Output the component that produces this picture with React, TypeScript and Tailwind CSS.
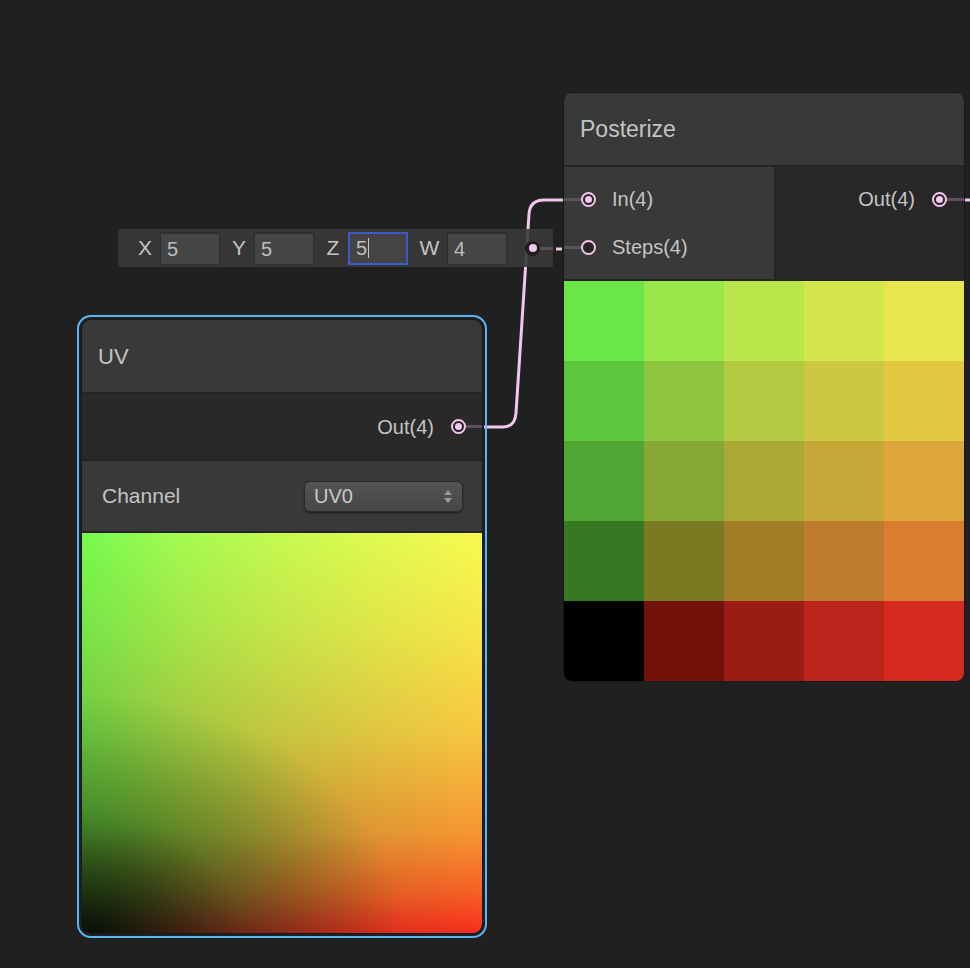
import React from 'react';

const PINK = '#f3c6ee';

const posterizeCells: string[] = [
  'bg-[#6be649]', 'bg-[#99e649]', 'bg-[#b9e74b]', 'bg-[#d4e64b]', 'bg-[#e8e64e]',
  'bg-[#5dc63c]', 'bg-[#8ec53f]', 'bg-[#b3c942]', 'bg-[#cdc843]', 'bg-[#e3c942]',
  'bg-[#4fa632]', 'bg-[#87a835]', 'bg-[#aaa836]', 'bg-[#c5a838]', 'bg-[#dea73b]',
  'bg-[#377822]', 'bg-[#7b7a22]', 'bg-[#a27d28]', 'bg-[#c07c2e]', 'bg-[#d97e2f]',
  'bg-[#000000]', 'bg-[#72100a]', 'bg-[#9b1c15]', 'bg-[#b9241b]', 'bg-[#d52a20]',
];

// port circle: ring + optional dot
const Port = ({ filled = true }: { filled?: boolean }) => (
  <span className="flex h-[15px] w-[15px] shrink-0 items-center justify-center rounded-full border-2 border-[#f3c6ee] bg-[#252525]">
    {filled && <span className="h-[7px] w-[7px] rounded-full bg-[#f3c6ee]" />}
  </span>
);

const Stub = ({ w }: { w: string }) => <span className={`h-[3px] shrink-0 bg-[#5b535a] ${w}`} />;

const VecField = ({
  label,
  value,
  labelW = 'w-[30px]',
  focused = false,
}: {
  label: string;
  value: string;
  labelW?: string;
  focused?: boolean;
}) => (
  <div className="flex items-center">
    <span className={`${labelW} text-center text-[21px] text-[#c4c4c4]`}>{label}</span>
    <div
      className={`flex h-[33px] w-[60px] items-center pl-[6px] text-[20px] text-[#bdbdbd] ${
        focused ? 'border-2 border-[#3b5cc4] bg-[#444444]' : 'border border-t-2 border-[#2e2e2e] bg-[#454545]'
      }`}
    >
      <span>{value}</span>
      {focused && <span className="ml-[1px] h-[20px] w-[1px] bg-[#c8c8c8]" />}
    </div>
  </div>
);

const Edges = () => (
  <svg className="absolute left-0 top-0" width={970} height={968} viewBox="0 0 970 968" fill="none">
    <path
      d="M484 427 L503 427 Q515 427 516 413 L529 214 Q530 200 544 200 L584 200"
      stroke={PINK}
      strokeWidth={3}
    />
    <path d="M556 249 L562 249" stroke={PINK} strokeWidth={3} />
    <path d="M965 200 L970 200" stroke={PINK} strokeWidth={3} />
  </svg>
);

const StepsInput = () => (
  <div className="absolute left-[118px] top-[229px] z-20 flex h-[38px] w-[435px] items-center rounded-[2px] bg-[#393939]/90 pl-[12px]">
    <div className="flex items-center gap-[4px]">
      <VecField label="X" value="5" />
      <VecField label="Y" value="5" />
      <VecField label="Z" value="5" focused />
      <VecField label="W" value="4" labelW="w-[35px]" />
    </div>
    <div className="ml-auto flex items-center">
      <span className="flex h-[15px] w-[15px] items-center justify-center rounded-full bg-[#1e1e1e]">
        <span className="h-[8px] w-[8px] rounded-full bg-[#f3c6ee]" />
      </span>
      <Stub w="w-[13px]" />
    </div>
  </div>
);

const PosterizeNode = () => (
  <div className="absolute left-[563px] top-[92px] z-10 flex w-[402px] flex-col overflow-hidden rounded-[9px] border border-[#191919] bg-[#242424]">
    <div className="flex h-[72px] items-center bg-[#393939] pl-[16px] text-[23px] text-[#c4c4c4]">Posterize</div>
    <div className="mt-[2px] flex h-[112px]">
      <div className="flex w-[210px] flex-col bg-[#393939] py-[8px]">
        <div className="flex h-[48px] items-center">
          <Stub w="w-[17px]" />
          <Port />
          <span className="ml-[16px] text-[20px] text-[#c4c4c4]">In(4)</span>
        </div>
        <div className="flex h-[48px] items-center">
          <Stub w="w-[17px]" />
          <Port filled={false} />
          <span className="ml-[16px] text-[20px] text-[#c4c4c4]">Steps(4)</span>
        </div>
      </div>
      <div className="ml-[2px] flex flex-1 flex-col bg-[#282828] py-[8px]">
        <div className="flex h-[48px] items-center justify-end">
          <span className="mr-[17px] text-[20px] text-[#c4c4c4]">Out(4)</span>
          <Port />
          <Stub w="w-[17px]" />
        </div>
      </div>
    </div>
    <div className="mt-[2px] grid grid-cols-5">
      {posterizeCells.map((c, i) => (
        <div key={i} className={`h-[80px] ${c}`} />
      ))}
    </div>
  </div>
);

const UVNode = () => (
  <div className="absolute left-[77px] top-[315px] z-10 rounded-[14px] border-2 border-[#5db4f5] p-[2px]">
    <div className="flex w-[402px] flex-col overflow-hidden rounded-[10px] border border-[#191919] bg-[#242424]">
      <div className="flex h-[72px] items-center bg-[#393939] pl-[16px] text-[22px] text-[#c4c4c4]">UV</div>
      <div className="mt-[2px] flex h-[65px] items-center justify-end bg-[#292929]">
        <span className="mr-[17px] text-[20px] text-[#c4c4c4]">Out(4)</span>
        <Port />
        <Stub w="w-[16px]" />
      </div>
      <div className="mt-[2px] flex h-[70px] items-center justify-between bg-[#393939] pl-[20px] pr-[19px]">
        <span className="text-[21px] text-[#c4c4c4]">Channel</span>
        <div className="flex h-[31px] w-[159px] items-center justify-between rounded-[6px] border border-[#2a2a2a] bg-[linear-gradient(#545454,#464646)] pl-[9px] pr-[10px] shadow-[0_1px_2px_rgba(0,0,0,0.5)]">
          <span className="text-[20px] text-[#c8c8c8]">UV0</span>
          <svg width="8" height="15" viewBox="0 0 8 15" fill="#9a9a9a">
            <path d="M0 6 L4 1 L8 6 Z" />
            <path d="M0 9 L4 14 L8 9 Z" />
          </svg>
        </div>
      </div>
      {/* uv preview: red by x, green by y, darkened toward the bottom-left */}
      <div className="mt-[2px] h-[400px] [background-image:radial-gradient(ellipse_320px_240px_at_0%_100%,rgb(15,90,60)_0%,rgb(150,225,200)_50%,rgb(255,255,255)_100%),linear-gradient(to_bottom,rgb(0,250,80)_0%,rgb(0,228,72)_25%,rgb(0,198,64)_50%,rgb(0,150,50)_75%,rgb(0,95,36)_90%,rgb(0,45,30)_100%),linear-gradient(to_right,rgb(118,0,0)_0%,rgb(165,0,0)_25%,rgb(198,0,0)_50%,rgb(225,0,0)_75%,rgb(248,0,0)_100%)] [background-blend-mode:multiply,screen,normal]" />
    </div>
  </div>
);

export default function App() {
  return (
    <div
      className="relative h-[968px] w-[970px] overflow-hidden bg-[#202020]"
      style={{ fontFamily: '"Liberation Sans", Arial, sans-serif' }}
    >
      <Edges />
      <UVNode />
      <PosterizeNode />
      <StepsInput />
    </div>
  );
}
